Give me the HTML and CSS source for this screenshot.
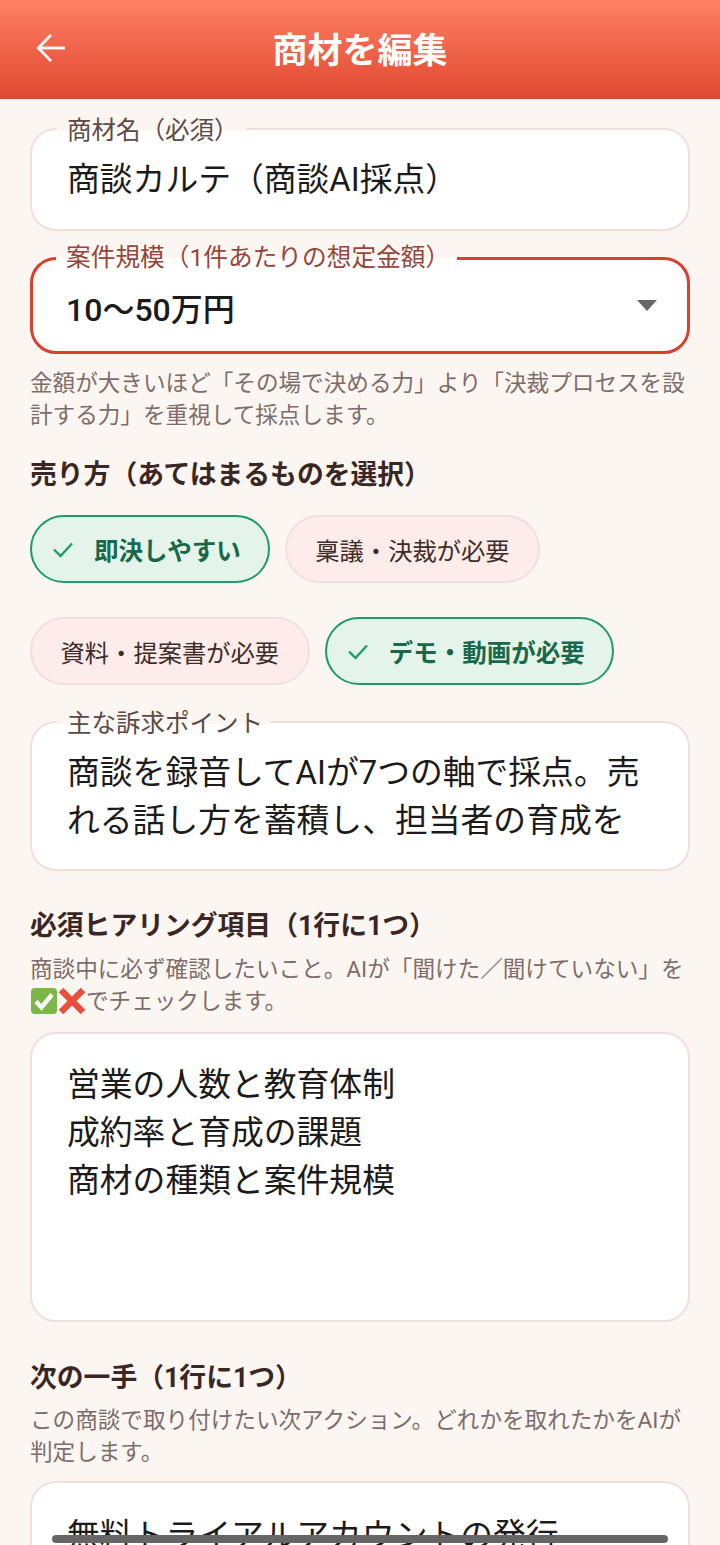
FILE: index.html
```html
<!DOCTYPE html>
<html lang="ja">
<head>
<meta charset="UTF-8">
<meta name="viewport" content="width=device-width, initial-scale=1.0">
<title>商材を編集</title>
<link rel="stylesheet" href="styles.css">
</head>
<body>

<header class="app-bar">
  <svg class="back-icon" viewBox="0 0 32 32" width="30" height="30" fill="none" stroke="#fff" stroke-width="3">
    <path d="M31 16H3"/>
    <path d="M16 2L2.5 16L16 30"/>
  </svg>
  <h1 class="app-title">商材を編集</h1>
</header>

<main class="form">
  <div class="field field-name">
    <span class="field-label">商材名（必須）</span>
    <div class="field-value">商談カルテ（商談AI採点）</div>
  </div>

  <div class="field field-select">
    <span class="field-label">案件規模（1件あたりの想定金額）</span>
    <div class="field-value">10〜50万円</div>
    <span class="select-arrow"></span>
  </div>
  <p class="hint hint-select">金額が大きいほど「その場で決める力」より「決裁プロセスを設計する力」を重視して採点します。</p>

  <h2 class="section-title title-sell">売り方（あてはまるものを選択）</h2>
  <div class="chips">
    <span class="chip chip-on">
      <svg class="check-icon" viewBox="0 0 24 24" width="24" height="24" fill="none" stroke="#1f9a6c" stroke-width="2.4"><path d="M3 12.5L9.5 19L21 6.5"/></svg>
      即決しやすい
    </span>
    <span class="chip">稟議・決裁が必要</span>
    <span class="chip">資料・提案書が必要</span>
    <span class="chip chip-on">
      <svg class="check-icon" viewBox="0 0 24 24" width="24" height="24" fill="none" stroke="#1f9a6c" stroke-width="2.4"><path d="M3 12.5L9.5 19L21 6.5"/></svg>
      デモ・動画が必要
    </span>
  </div>

  <div class="field field-appeal">
    <span class="field-label">主な訴求ポイント</span>
    <div class="field-value">商談を録音してAIが7つの軸で採点。売れる話し方を蓄積し、担当者の育成を</div>
  </div>

  <h2 class="section-title title-hearing">必須ヒアリング項目（1行に1つ）</h2>
  <p class="hint">商談中に必ず確認したいこと。AIが「聞けた／聞けていない」を<br><svg class="emoji" viewBox="0 0 28 28" width="28" height="28"><rect x="1" y="1" width="26" height="26" rx="4" fill="#7ab648"/><path d="M6 14.5L11.5 20.5L22 7.5" fill="none" stroke="#fff" stroke-width="4.4"/></svg><svg class="emoji" viewBox="0 0 28 28" width="28" height="28"><path d="M3 3L25 25M25 3L3 25" fill="none" stroke="#e8503e" stroke-width="6.5"/></svg>でチェックします。</p>
  <div class="field field-hearing">
    <div class="field-value">営業の人数と教育体制<br>成約率と育成の課題<br>商材の種類と案件規模</div>
  </div>

  <h2 class="section-title title-next">次の一手（1行に1つ）</h2>
  <p class="hint">この商談で取り付けたい次アクション。どれかを取れたかをAIが判定します。</p>
  <div class="field field-next">
    <div class="field-value">無料トライアルアカウントの発行</div>
  </div>
</main>

<div class="home-bar"></div>

</body>
</html>
```

FILE: styles.css
```css
html, body {
  margin: 0;
  padding: 0;
}
body {
  position: relative;
  height: 1545px;
  overflow: hidden;
  background-color: #fcf6f3;
  font-family: "Roboto", "Noto Sans CJK JP", sans-serif;
  color: #1c1b1b;
}
.app-bar {
  position: relative;
  box-sizing: border-box;
  height: 99px;
  padding-bottom: 4px;
  display: flex;
  align-items: center;
  justify-content: center;
  background: linear-gradient(180deg, #fd8166 0%, #f0644a 50%, #df4830 100%);
  border-bottom: 1px solid #d9452f;
}
.back-icon {
  position: absolute;
  left: 36px;
  top: 33px;
}
.app-title {
  margin: 0;
  font-size: 35px;
  font-weight: 700;
  color: #fff;
}
.form {
  padding: 0 30px;
}
.field {
  position: relative;
  box-sizing: border-box;
  background-color: #fff;
  border: 2px solid #efe0dc;
  border-radius: 26px;
  padding: 26px 35px 0;
}
.field-label {
  position: absolute;
  left: 25px;
  top: -13px;
  padding: 0 7px 0 10px;
  font-size: 24.5px;
  line-height: 28px;
  color: #5c4a46;
  background: linear-gradient(180deg, #fcf6f3 50%, #fff 50%);
}
.field-value {
  font-size: 32.8px;
  line-height: 48px;
}
.field-name {
  margin-top: 29px;
  height: 103px;
}
.field-select {
  margin-top: 26px;
  height: 97px;
  padding-top: 26px;
  border: 3px solid #d9402f;
}
.field-select .field-label {
  left: 23px;
  top: -16px;
  font-size: 24.7px;
  color: #96463a;
}
.field-select .field-value {
  font-size: 32px;
  font-weight: 500;
  margin-left: -2px;
}
.select-arrow {
  position: absolute;
  right: 30px;
  top: 40px;
  border-left: 10px solid transparent;
  border-right: 10px solid transparent;
  border-top: 11px solid #666;
}
.hint {
  margin: 0;
  font-size: 22.6px;
  line-height: 32px;
  color: #7d6d6a;
}
.hint-select {
  margin-top: 14px;
}
.emoji {
  vertical-align: -6px;
}
.section-title {
  margin: 0;
  font-size: 26.8px;
  line-height: 38px;
  font-weight: 700;
  color: #3a2723;
}
.title-sell {
  margin-top: 24px;
}
.chips {
  display: flex;
  flex-wrap: wrap;
  gap: 34px 15px;
  margin-top: 21px;
}
.chip {
  box-sizing: border-box;
  height: 68px;
  display: flex;
  align-items: center;
  padding: 0 28.5px;
  border: 2px solid #efe0dc;
  border-radius: 34px;
  background-color: #fdecea;
  font-size: 24.3px;
  color: #3e2c28;
}
.chip-on {
  padding: 0 27px 0 19px;
  border-color: #1f9a6c;
  background-color: #e4f4eb;
  color: #17694a;
  font-size: 24.5px;
  font-weight: 700;
}
.check-icon {
  margin-right: 19px;
}
.field-appeal {
  margin-top: 36px;
  height: 150px;
}
.title-hearing {
  margin-top: 36px;
}
.title-hearing + .hint {
  margin-top: 9px;
}
.field-hearing {
  margin-top: 14px;
  height: 290px;
  padding-top: 27px;
}
.title-next {
  margin-top: 37px;
}
.title-next + .hint {
  margin-top: 8px;
}
.field-next {
  margin-top: 12px;
  height: 90px;
  padding-top: 29px;
}
.home-bar {
  position: absolute;
  left: 52px;
  top: 1535px;
  width: 616px;
  height: 8px;
  border-radius: 4px;
  background-color: #666;
}
```
